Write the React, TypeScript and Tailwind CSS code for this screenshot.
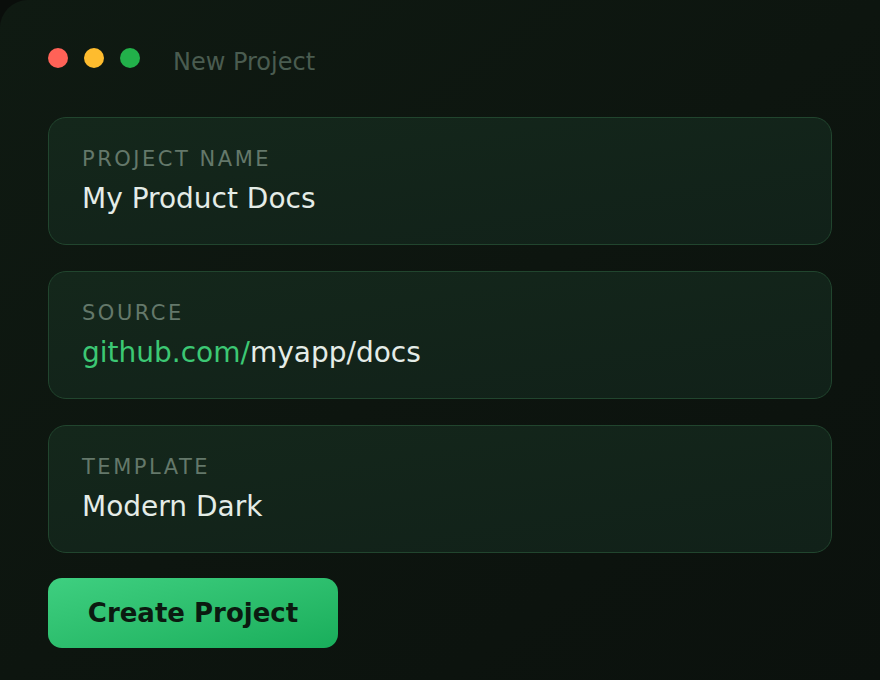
const fields = [
  { label: 'Project Name', value: <>My Product Docs</> },
  {
    label: 'Source',
    value: (
      <>
        <span className="text-[#3cc874]">github.com/</span>myapp/docs
      </>
    ),
  },
  { label: 'Template', value: <>Modern Dark</> },
]

export default function App() {
  return (
    <div
      className="w-[880px] h-[680px] overflow-hidden bg-[#0a0e0b]"
      style={{ fontFamily: '"DejaVu Sans", Verdana, sans-serif' }}
    >
      <div className="w-full h-full rounded-tl-[28px] bg-gradient-to-br from-[#0f1a12] via-[#0d150f] to-[#0b110d] px-[48px] pt-[40px]">
        {/* Title bar */}
        <div className="flex items-center mb-[41px]">
          <div className="flex items-center gap-[16px]">
            <span className="w-[20px] h-[20px] rounded-full bg-[#ff6257]" />
            <span className="w-[20px] h-[20px] rounded-full bg-[#febc2e]" />
            <span className="w-[20px] h-[20px] rounded-full bg-[#22b14a]" />
          </div>
          <span className="ml-[33px] pt-[8px] text-[24px] leading-[28px] text-[#4a5c50]">New Project</span>
        </div>

        {/* Fields */}
        <div className="flex flex-col gap-[26px]">
          {fields.map((f) => (
            <div
              key={f.label}
              className="h-[128px] rounded-[18px] border border-[#21452e] bg-gradient-to-br from-[#14271b] to-[#112119] pl-[33px] pr-[32px] pt-[27px]"
            >
              <div className="text-[21px] leading-[28px] uppercase tracking-[0.12em] text-[#64786a]">{f.label}</div>
              <div className="mt-[8px] text-[28px] leading-[36px] text-[#e4ece7]">{f.value}</div>
            </div>
          ))}

          <button className="-mt-[1px] w-[290px] h-[70px] rounded-[14px] bg-gradient-to-br from-[#3ecf80] to-[#18ae5b] flex items-center justify-center text-[26px] font-bold text-[#0b1a10]">
            Create Project
          </button>
        </div>
      </div>
    </div>
  )
}
